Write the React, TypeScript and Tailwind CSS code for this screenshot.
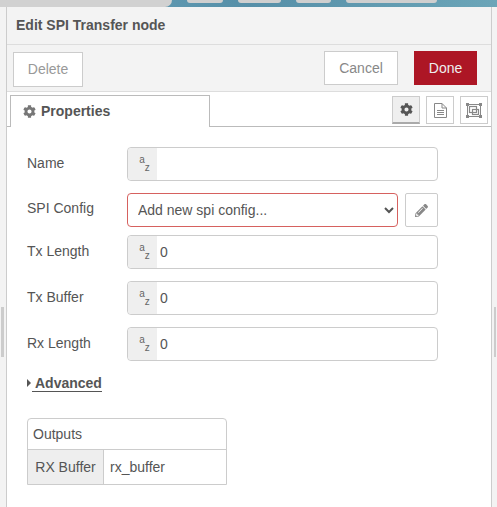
import { FaCog, FaPencilAlt } from 'react-icons/fa'

const fields = [
  { label: 'Tx Length', value: '0', top: 'mt-[8px]' },
  { label: 'Tx Buffer', value: '0', top: 'mt-[12px]' },
  { label: 'Rx Length', value: '0', top: 'mt-[12px]' },
]

function TypeBadge() {
  return (
    <div className="flex h-full w-[29px] shrink-0 items-center justify-center rounded-l-[4px] bg-[#efefef] pl-[4px] text-[#666]">
      <span className="mb-[9px] text-[10px] leading-[7px]">a</span>
      <span className="mt-[6px] text-[10px] leading-[7px]">z</span>
    </div>
  )
}

function TextRow({ label, value, className = '' }: { label: string; value: string; className?: string }) {
  return (
    <div className={`flex items-center ${className}`}>
      <label className="-mt-[1px] w-[100px] shrink-0 text-[14px] text-[#555]">{label}</label>
      <div className="flex h-[34px] w-[311px] items-center rounded-[4px] border border-[#ccc] bg-white">
        <TypeBadge />
        <input
          readOnly
          value={value}
          className="h-full min-w-0 flex-1 bg-transparent pl-[3px] text-[14px] text-[#555] outline-none"
        />
      </div>
    </div>
  )
}

function ToolButton({ children, active }: { children: React.ReactNode; active?: boolean }) {
  return (
    <div
      className={`flex h-[28px] w-[28px] items-center justify-center border border-[#ccc] text-[#666] ${
        active ? 'border-b-[2px] border-b-[#aaa] bg-[#efefef]' : 'bg-white'
      }`}
    >
      {children}
    </div>
  )
}

export default function App() {
  return (
    <div className="flex h-[507px] w-[497px] flex-col overflow-hidden bg-[#f3f3f3] font-['Liberation_Sans',Arial,sans-serif]">
      <div className="flex h-[7px] shrink-0 bg-linear-to-r from-[#6ba6bd] via-[#568fa8] to-[#6ba5b8]">
        <div className="h-full w-[172px] rounded-br-[12px] bg-[#d1d1d1]" />
        <div className="ml-[15px] h-[3px] w-[36px] rounded-b-[3px] bg-[#cfcfcf]" />
        <div className="ml-[15px] h-[3px] w-[43px] rounded-b-[3px] bg-[#cfcfcf]" />
        <div className="ml-[15px] h-[3px] w-[35px] rounded-b-[3px] bg-[#cfcfcf]" />
        <div className="ml-[15px] h-[3px] w-[91px] rounded-b-[3px] bg-[#cfcfcf]" />
      </div>

      <div className="flex min-h-0 flex-1">
        <div className="flex w-[6px] shrink-0 items-start">
          <div className="ml-[1px] mt-[300px] h-[50px] w-[3px] bg-[#ccc]" />
        </div>

        <div className="flex w-[486px] shrink-0 flex-col border-x border-[#ccc] bg-white">
          <div className="flex h-[38px] shrink-0 items-center border-b border-[#ddd] bg-[#f3f3f3] pl-[9px] text-[14px] font-bold text-[#555]">
            Edit SPI Transfer node
          </div>

          <div className="flex h-[47px] shrink-0 items-start border-b border-[#ddd] bg-[#f3f3f3] pl-[6px] pr-[14px]">
            <button className="mt-[7px] h-[35px] w-[70px] border border-[#ccc] bg-white text-[14px] text-[#999]">
              Delete
            </button>
            <button className="ml-auto mt-[6px] h-[34px] w-[74px] border border-[#ccc] bg-white text-[14px] text-[#888]">
              Cancel
            </button>
            <button className="ml-[16px] mt-[6px] h-[34px] w-[63px] bg-[#ad1625] text-[14px] text-[#eee]">
              Done
            </button>
          </div>

          <div className="flex h-[35px] shrink-0 items-end justify-between border-b border-[#bbb] pl-[3px] pr-[3px]">
            <div className="-mb-[1px] flex h-[32px] w-[200px] items-center border-x border-t border-[#bbb] bg-white pb-[1px] pl-[12px] text-[14px] font-bold text-[#555]">
              <FaCog className="mr-[5px] text-[13px] text-[#777]" />
              Properties
            </div>
            <div className="mb-[2px] flex gap-[6px]">
              <ToolButton active>
                <FaCog className="text-[13px] text-[#555]" />
              </ToolButton>
              <ToolButton>
                <svg width="13" height="15" viewBox="0 0 13 15" fill="none" stroke="#888" strokeWidth="1">
                  <path d="M0.5 0.5H8L12.5 5V14.5H0.5Z" />
                  <path d="M8 0.5V5H12.5" />
                  <path d="M3 7.5H10M3 9.5H10M3 11.5H10" />
                </svg>
              </ToolButton>
              <ToolButton>
                <svg width="16" height="15" viewBox="0 0 16 15" fill="none" stroke="#888" strokeWidth="1">
                  <rect x="1.5" y="1.5" width="13" height="12" />
                  <rect x="3.5" y="3.5" width="7" height="6" strokeWidth="1.2" />
                  <rect x="6.5" y="6.5" width="6" height="5" strokeWidth="1.2" />
                  <rect x="0" y="0" width="3" height="3" fill="#888" stroke="none" />
                  <rect x="13" y="0" width="3" height="3" fill="#888" stroke="none" />
                  <rect x="0" y="12" width="3" height="3" fill="#888" stroke="none" />
                  <rect x="13" y="12" width="3" height="3" fill="#888" stroke="none" />
                </svg>
              </ToolButton>
            </div>
          </div>

          <div className="flex flex-col pl-[20px] pt-[20px]">
            <TextRow label="Name" value="" />

            <div className="mt-[12px] flex items-center">
              <label className="-mt-[3px] w-[100px] shrink-0 text-[14px] text-[#555]">SPI Config</label>
              <select className="h-[34px] w-[271px] rounded-[4px] border border-[#d6615f] bg-white pl-[6px] text-[14px] text-[#555] outline-none">
                <option>Add new spi config...</option>
              </select>
              <div className="ml-[7px] flex h-[34px] w-[33px] items-center justify-center rounded-[2px] border border-[#ccc] text-[#888]">
                <FaPencilAlt className="text-[13px]" />
              </div>
            </div>

            {fields.map(field => (
              <TextRow key={field.label} label={field.label} value={field.value} className={field.top} />
            ))}

            <div className="mt-[14px] flex h-[16px] items-center text-[14px] font-bold text-[#555]">
              <span className="mr-[1px] h-0 w-0 border-y-[4px] border-l-[4px] border-y-transparent border-l-[#555]" />
              <span className="border-b border-[#555] pl-[3px] leading-[16px]">Advanced</span>
            </div>

            <div className="mt-[27px] w-[200px] rounded-t-[4px] border border-[#ccc] text-[14px] text-[#555]">
              <div className="flex h-[31px] items-center border-b border-[#ccc] pl-[5px]">Outputs</div>
              <div className="flex h-[34px] items-center">
                <div className="flex h-full w-[76px] items-center justify-center border-r border-[#ccc] bg-[#eee]">
                  RX Buffer
                </div>
                <span className="pl-[6px]">rx_buffer</span>
              </div>
            </div>
          </div>
        </div>

        <div className="flex flex-1 items-start">
          <div className="ml-[2px] mt-[300px] h-[50px] w-[2px] bg-[#ccc]" />
        </div>
      </div>
    </div>
  )
}
